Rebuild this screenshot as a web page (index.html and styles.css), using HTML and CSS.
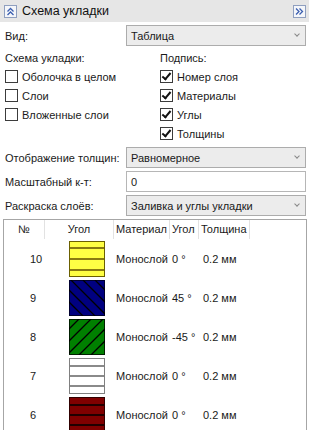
FILE: index.html
```html
<!DOCTYPE html>
<html lang="ru">
<head>
<meta charset="UTF-8" />
<title>Схема укладки</title>
<link rel="stylesheet" href="styles.css">
</head>
<body>
<div class="panel">
  <div class="titlebar">
    <span class="tb-btn collapse">
      <svg width="9" height="9" viewBox="0 0 9 9"><path d="M1.5 4.5 L4.5 1.5 L7.5 4.5 M1.5 8 L4.5 5 L7.5 8" fill="none" stroke="#3b5fb0" stroke-width="1.3"/></svg>
    </span>
    <span class="title">Схема укладки</span>
    <span class="tb-btn expand">
      <svg width="9" height="9" viewBox="0 0 9 9"><path d="M1 1.5 L4 4.5 L1 7.5 M4.5 1.5 L7.5 4.5 L4.5 7.5" fill="none" stroke="#3b5fb0" stroke-width="1.3"/></svg>
    </span>
  </div>

  <div class="content">
    <div class="field">
      <span class="label">Вид:</span>
      <div class="select">Таблица<span class="chev"></span></div>
    </div>

    <div class="groups">
      <div class="group">
        <div class="group-title">Схема укладки:</div>
        <div class="check"><span class="box"></span>Оболочка в целом</div>
        <div class="check"><span class="box"></span>Слои</div>
        <div class="check"><span class="box"></span>Вложенные слои</div>
      </div>
      <div class="group right">
        <div class="group-title">Подпись:</div>
        <div class="check"><span class="box on"></span>Номер слоя</div>
        <div class="check"><span class="box on"></span>Материалы</div>
        <div class="check"><span class="box on"></span>Углы</div>
        <div class="check"><span class="box on"></span>Толщины</div>
      </div>
    </div>

    <div class="field">
      <span class="label">Отображение толщин:</span>
      <div class="select">Равномерное<span class="chev"></span></div>
    </div>
    <div class="field">
      <span class="label">Масштабный к-т:</span>
      <div class="input">0</div>
    </div>
    <div class="field">
      <span class="label">Раскраска слоёв:</span>
      <div class="select">Заливка и углы укладки<span class="chev"></span></div>
    </div>
  </div>

  <div class="table">
    <div class="thead">
      <div class="c-num">№</div>
      <div class="c-sw">Угол</div>
      <div class="c-mat">Материал</div>
      <div class="c-ang">Угол</div>
      <div class="c-thk">Толщина</div>
    </div>
    <div class="row">
      <div class="c-num">10</div>
      <div class="c-sw"><span class="swatch yellow"></span></div>
      <div class="c-mat">Монослой</div>
      <div class="c-ang">0 °</div>
      <div class="c-thk">0.2 мм</div>
    </div>
    <div class="row">
      <div class="c-num">9</div>
      <div class="c-sw">
        <svg class="swatch-svg" width="36" height="36" viewBox="0 0 36 36">
          <rect x="0.5" y="0.5" width="35" height="35" fill="#000080" stroke="#000030"/>
          <path d="M-22 0 L14 36 M-10 0 L26 36 M2 0 L38 36 M14 0 L50 36 M26 0 L62 36" stroke="#000" stroke-width="1.3"/>
        </svg>
      </div>
      <div class="c-mat">Монослой</div>
      <div class="c-ang">45 °</div>
      <div class="c-thk">0.2 мм</div>
    </div>
    <div class="row">
      <div class="c-num">8</div>
      <div class="c-sw">
        <svg class="swatch-svg" width="36" height="36" viewBox="0 0 36 36">
          <rect x="0.5" y="0.5" width="35" height="35" fill="#008000" stroke="#002000"/>
          <path d="M10 0 L-26 36 M22 0 L-14 36 M34 0 L-2 36 M46 0 L10 36 M58 0 L22 36" stroke="#000" stroke-width="1.3"/>
        </svg>
      </div>
      <div class="c-mat">Монослой</div>
      <div class="c-ang">-45 °</div>
      <div class="c-thk">0.2 мм</div>
    </div>
    <div class="row">
      <div class="c-num">7</div>
      <div class="c-sw"><span class="swatch white"></span></div>
      <div class="c-mat">Монослой</div>
      <div class="c-ang">0 °</div>
      <div class="c-thk">0.2 мм</div>
    </div>
    <div class="row">
      <div class="c-num">6</div>
      <div class="c-sw"><span class="swatch red"></span></div>
      <div class="c-mat">Монослой</div>
      <div class="c-ang">0 °</div>
      <div class="c-thk">0.2 мм</div>
    </div>
  </div>
</div>
</body>
</html>
```

FILE: styles.css
```css
* {
  box-sizing: border-box;
  margin: 0;
  padding: 0;
}
body {
  font-family: "Liberation Sans", Arial, sans-serif;
  font-size: 11px;
  color: #1a1a1a;
  background: #fff;
  width: 309px;
  height: 430px;
  overflow: hidden;
}
.panel {
  width: 309px;
}

/* Title bar */
.titlebar {
  height: 22px;
  background: #e6e6e6;
  display: flex;
  align-items: center;
  padding: 0 3px 0 4px;
}
.tb-btn {
  width: 13px;
  height: 13px;
  border: 1px solid #8f9fbf;
  background: #f4f6fa;
  display: flex;
  align-items: center;
  justify-content: center;
}
.title {
  flex: 1;
  margin-left: 5px;
  font-size: 12.5px;
  color: #111;
}

/* Form */
.content {
  padding: 3px 3px 0 5px;
}
.field {
  display: flex;
  align-items: center;
  height: 21px;
  margin-bottom: 3px;
}
.label {
  width: 121px;
  white-space: nowrap;
}
.select,
.input {
  flex: 1;
  height: 21px;
  border: 1px solid #acacac;
  display: flex;
  align-items: center;
  padding-left: 4px;
  position: relative;
}
.select {
  background: #ececec;
}
.input {
  background: #fff;
  border-color: #b6b6b6;
}
.chev {
  position: absolute;
  right: 6px;
  top: 6px;
  width: 4px;
  height: 4px;
  border-right: 1px solid #888;
  border-bottom: 1px solid #888;
  transform: rotate(45deg);
}

.groups {
  display: flex;
  margin: 2px 0 4px;
}
.group {
  width: 155px;
}
.group.right {
  width: auto;
}
.group-title {
  height: 18px;
  line-height: 18px;
}
.check {
  height: 19px;
  display: flex;
  align-items: center;
}
.box {
  width: 13px;
  height: 13px;
  border: 1px solid #3c3c3c;
  background: #fff;
  margin-right: 4px;
  position: relative;
}
.box.on::after {
  content: "";
  position: absolute;
  left: 3px;
  top: 0;
  width: 3px;
  height: 7px;
  border-right: 2px solid #111;
  border-bottom: 2px solid #111;
  transform: rotate(40deg);
}

/* Table */
.table {
  margin-left: 3px;
  width: 304px;
  height: 220px;
  border: 1px solid #a6a6a6;
  border-bottom: none;
}
.thead,
.row {
  display: flex;
}
.thead {
  height: 19px;
  align-items: center;
}
.thead > div {
  height: 19px;
  line-height: 19px;
  border-right: 1px solid #e2e2e2;
}
.row {
  height: 39px;
  align-items: center;
}
.c-num { width: 41px; padding-left: 26px; }
.c-sw { width: 69px; text-align: center; }
.c-mat { width: 56px; padding-left: 2px; white-space: nowrap; }
.c-ang { width: 29px; padding-left: 2px; white-space: nowrap; }
.c-thk { width: 51px; padding-left: 2px; white-space: nowrap; }
.thead .c-num { padding-left: 0; text-align: center; }
.row .c-sw { height: 39px; padding: 2px 0 0 24px; text-align: left; }
.row .c-thk { padding-left: 4px; }

.swatch,
.swatch-svg {
  display: block;
  width: 36px;
  height: 36px;
}
.swatch {
  border: 1px solid #333;
}
.swatch.yellow {
  border-color: #6b6000;
  background: repeating-linear-gradient(#ffff44 0 5px, #8a7a10 5px 7px, #ffff44 7px 11px);
}
.swatch.white {
  border-color: #808080;
  background: repeating-linear-gradient(#fff 0 6px, #8a8a8a 6px 8px, #fff 8px 10px);
}
.swatch.red {
  border-color: #300000;
  background: repeating-linear-gradient(#800000 0 6px, #200000 6px 8px, #800000 8px 10px);
}
```
